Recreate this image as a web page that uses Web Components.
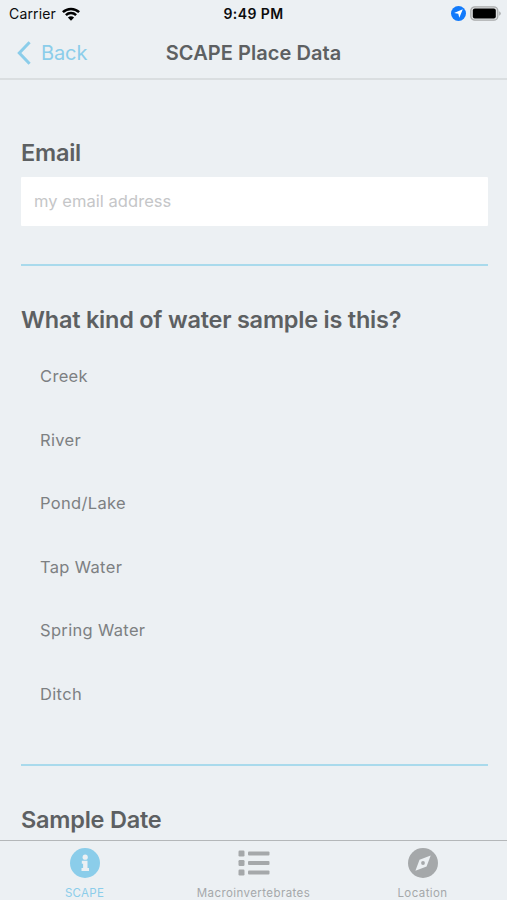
<!DOCTYPE html>
<html lang="en">
<head>
<meta charset="utf-8">
<title>SCAPE Place Data</title>
<style>
  body {
    margin: 0;
    font-family: Inter, "Liberation Sans", sans-serif;
    --bg: #ecf0f3;
    --accent: #8bcdea;
    --rule: #a9daec;
    --heading: #5d6062;
    --muted: #a5a8aa;
  }
</style>
</head>
<body>
<phone-screen>
  <status-bar slot="top" carrier="Carrier" time="9:49 PM"></status-bar>
  <nav-header slot="top" back="Back">SCAPE Place Data</nav-header>
  <form-section heading="Email" style="height: 186px">
    <text-field placeholder="my email address"></text-field>
  </form-section>
  <form-section heading="What kind of water sample is this?" style="height: 500px">
    <choice-list>
      <choice-item>Creek</choice-item>
      <choice-item>River</choice-item>
      <choice-item>Pond/Lake</choice-item>
      <choice-item>Tap Water</choice-item>
      <choice-item>Spring Water</choice-item>
      <choice-item>Ditch</choice-item>
    </choice-list>
  </form-section>
  <form-section heading="Sample Date" style="height: 120px"></form-section>
  <tab-bar slot="bottom">
    <tab-item icon="info" active>SCAPE</tab-item>
    <tab-item icon="list">Macroinvertebrates</tab-item>
    <tab-item icon="compass">Location</tab-item>
  </tab-bar>
</phone-screen>

<script>
function define(name, html, setup) {
  const template = document.createElement("template");
  template.innerHTML = html;
  customElements.define(name, class extends HTMLElement {
    constructor() {
      super();
      this.attachShadow({ mode: "open" });
    }

    connectedCallback() {
      if (this.shadowRoot.childNodes.length) return;
      this.shadowRoot.appendChild(template.content.cloneNode(true));
      if (setup) setup(this, this.shadowRoot);
    }
  });
}

define("phone-screen", /*html*/ `
<style>
  :host {
    display: flex;
    flex-direction: column;
    height: 900px;
    overflow: hidden;
    background: var(--bg);
  }
  main {
    flex: 1;
    min-height: 0;
    overflow: hidden;
    padding: 0 19px 0 21px;
  }
</style>
<slot name="top"></slot>
<main><slot></slot></main>
<slot name="bottom"></slot>
`);

define("status-bar", /*html*/ `
<style>
  :host {
    display: grid;
    grid-template-columns: 1fr auto 1fr;
    align-items: center;
    height: 27px;
    padding: 0 6px 0 9px;
    color: #0b0c0d;
    font-size: 14px;
    line-height: 27px;
  }
  .left, .right {
    display: flex;
    align-items: center;
  }
  .left { gap: 6px; }
  .right { justify-content: flex-end; gap: 4px; }
  #carrier { letter-spacing: 0.15px; }
  #time { font-weight: 600; letter-spacing: 0.4px; margin-right: 3px; }
  svg { display: block; }
</style>
<div class="left">
  <span id="carrier"></span>
  <svg width="18" height="14" viewBox="0 0 18 14">
    <g fill="none" stroke="#000" stroke-width="2.5">
      <path d="M.9 5.2a11.6 11.6 0 0 1 16.2 0"/>
      <path d="M3.9 8.2a7.3 7.3 0 0 1 10.2 0"/>
    </g>
    <path d="M9 13.8 5.9 10.6a4.5 4.5 0 0 1 6.2 0z"/>
  </svg>
</div>
<span id="time"></span>
<div class="right">
  <svg width="15" height="15" viewBox="0 0 15 15">
    <circle cx="7.5" cy="7.5" r="7.5" fill="#127afb"/>
    <path d="M11.8 3.3 8.3 11.7 7.3 7.8 3.1 6.9z" fill="#fff"/>
  </svg>
  <svg width="31" height="15" viewBox="0 0 31 15">
    <rect x=".8" y=".8" width="27" height="13.4" rx="4" fill="#dfe1e2" stroke="#a9abac" stroke-width="1.3"/>
    <rect x="2.8" y="2.6" width="23" height="9.8" rx="2" fill="#000"/>
    <path d="M29.2 5.2q1.6.9 1.6 2.3t-1.6 2.3z" fill="#a9abac"/>
  </svg>
</div>
`, (host, root) => {
  root.getElementById("carrier").textContent = host.getAttribute("carrier");
  root.getElementById("time").textContent = host.getAttribute("time");
});

define("nav-header", /*html*/ `
<style>
  :host {
    display: grid;
    grid-template-columns: 1fr auto 1fr;
    align-items: center;
    box-sizing: border-box;
    height: 53px;
    padding: 0 17px;
    border-bottom: 2px solid #dadee0;
    font-size: 20px;
  }
  .back {
    display: flex;
    align-items: center;
    gap: 10px;
    color: var(--accent);
  }
  #back { letter-spacing: -0.1px; }
  .title {
    color: var(--heading);
    font-weight: 600;
    letter-spacing: 0.05px;
  }
</style>
<div class="back">
  <svg width="14" height="24" viewBox="0 0 14 24" fill="none" stroke="currentColor" stroke-width="3"><path d="M12.6 1.3 2.3 12l10.3 10.7"/></svg>
  <span id="back"></span>
</div>
<div class="title"><slot></slot></div>
`, (host, root) => {
  root.getElementById("back").textContent = host.getAttribute("back");
});

define("form-section", /*html*/ `
<style>
  :host {
    display: block;
    box-sizing: border-box;
    padding-top: 40px;
    border-bottom: 2px solid var(--rule);
  }
  :host(:first-of-type) { padding-top: 59px; }
  h2 {
    margin: 0;
    font-size: 23.5px;
    line-height: 28px;
    font-weight: 600;
    letter-spacing: -0.23px;
    color: var(--heading);
  }
</style>
<h2></h2>
<slot></slot>
`, (host, root) => {
  root.querySelector("h2").textContent = host.getAttribute("heading");
});

define("text-field", /*html*/ `
<style>
  :host {
    display: block;
    margin-top: 10px;
  }
  input {
    display: block;
    box-sizing: border-box;
    width: 100%;
    height: 49px;
    padding: 0 13px 1px;
    border: 0;
    border-radius: 1px;
    background: #fff;
    font: 16.5px Inter, sans-serif;
    letter-spacing: 0.05px;
    outline: none;
  }
  input::placeholder { color: #c5c6c8; opacity: 1; }
</style>
<input type="email">
`, (host, root) => {
  root.querySelector("input").placeholder = host.getAttribute("placeholder");
});

define("choice-list", /*html*/ `
<style>
  :host {
    display: flex;
    flex-direction: column;
    padding: 11px 19px 0;
  }
</style>
<slot></slot>
`);

define("choice-item", /*html*/ `
<style>
  :host {
    display: block;
    height: 63.5px;
    line-height: 63px;
    font-size: 16.5px;
    letter-spacing: 0.33px;
    color: #7d8082;
  }
</style>
<slot></slot>
`);

define("tab-bar", /*html*/ `
<style>
  :host {
    display: grid;
    grid-template-columns: repeat(3, 1fr);
    flex: none;
    box-sizing: border-box;
    height: 60px;
    border-top: 1px solid #b4b7b9;
    background: var(--bg);
  }
</style>
<slot></slot>
`);

const icons = {
  info: /*html*/ `<circle cx="15" cy="15" r="15" fill="currentColor"/><g fill="var(--bg)"><circle cx="15.2" cy="9.2" r="2.6"/><path d="M11.8 12.8h5.7v7.2h1.5v3H11.5v-3h1.6v-4.2h-1.3z"/></g>`,
  list: /*html*/ `<g fill="currentColor" transform="translate(-.5)"><rect y="2.5" width="6" height="6" rx="1.2"/><rect y="12" width="6" height="6" rx="1.2"/><rect y="21.5" width="6" height="6" rx="1.2"/><rect x="9.5" y="3.5" width="21.5" height="4" rx="1"/><rect x="9.5" y="13" width="21.5" height="4" rx="1"/><rect x="9.5" y="22.5" width="21.5" height="4" rx="1"/></g>`,
  compass: /*html*/ `<circle cx="15" cy="15" r="15" fill="currentColor"/><path d="M22.7 7.4 18.6 18.4 7.4 22.7 11.5 11.7z" fill="var(--bg)"/><circle cx="15" cy="15" r="1.9" fill="currentColor"/>`,
};

define("tab-item", /*html*/ `
<style>
  :host {
    display: flex;
    flex-direction: column;
    align-items: center;
    padding-top: 7px;
    color: var(--muted);
    font-size: 11.5px;
    letter-spacing: 0.42px;
  }
  :host([active]) {
    color: var(--accent);
    letter-spacing: 0.3px;
  }
  svg {
    display: block;
    overflow: visible;
  }
  span {
    margin-top: 7px;
    line-height: 16px;
  }
</style>
<svg width="30" height="30" viewBox="0 0 30 30"></svg>
<span><slot></slot></span>
`, (host, root) => {
  root.querySelector("svg").innerHTML = icons[host.getAttribute("icon")];
});
</script>
</body>
</html>
